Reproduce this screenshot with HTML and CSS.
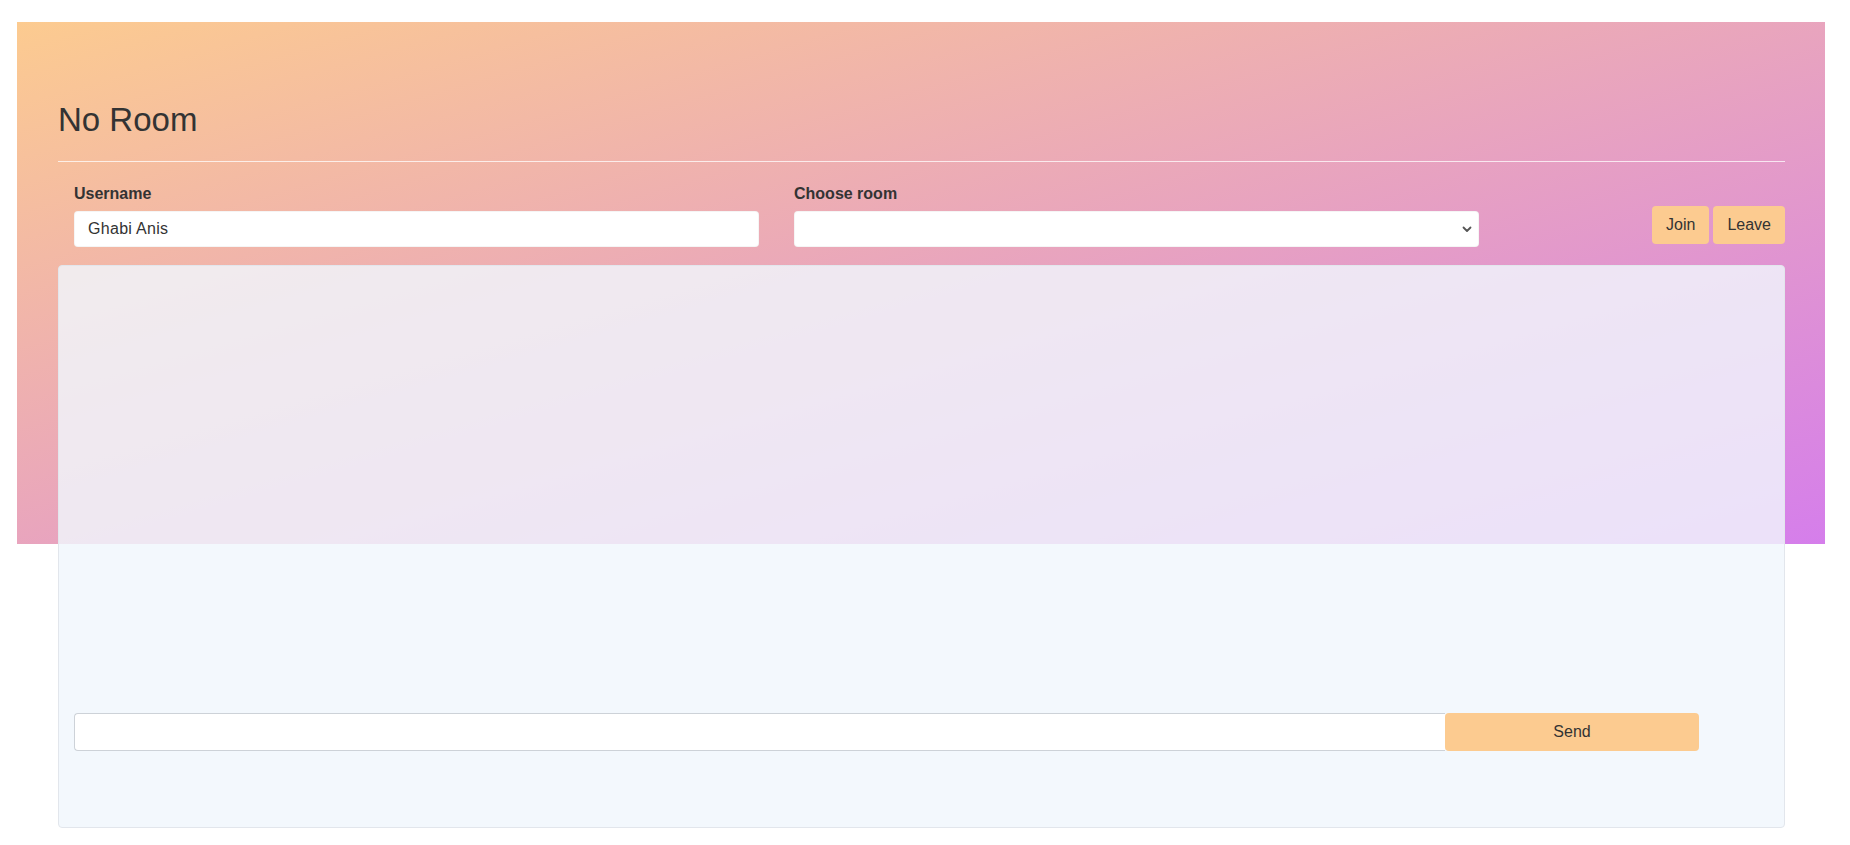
FILE: index.html
```html
<!DOCTYPE html>
<html lang="en">
<head>
<meta charset="utf-8">
<title>Chat</title>
<link rel="stylesheet" href="styles.css">
</head>
<body>
<div class="hero">
  <h1 class="room-title">No Room</h1>
  <hr class="divider">
  <div class="controls">
    <div class="field">
      <label class="field-label" for="username">Username</label>
      <input class="field-input" id="username" type="text" value="Ghabi Anis">
    </div>
    <div class="field">
      <label class="field-label" for="room">Choose room</label>
      <div class="select-wrap">
        <select class="field-select" id="room"><option></option></select>
        <svg class="chevron" width="10" height="7" viewBox="0 0 10 7" aria-hidden="true">
          <path d="M1.5 1.5 L5 5 L8.5 1.5" fill="none" stroke="#555" stroke-width="1.8" stroke-linecap="round" stroke-linejoin="round"/>
        </svg>
      </div>
    </div>
    <div class="actions">
      <button class="btn">Join</button>
      <button class="btn">Leave</button>
    </div>
  </div>
  <div class="chat">
    <div class="messages"></div>
    <div class="composer">
      <input class="message-input" type="text">
      <button class="send-btn">Send</button>
    </div>
  </div>
</div>
</body>
</html>
```

FILE: styles.css
```css
html, body {
  margin: 0;
  padding: 0;
  background: #ffffff;
}

body {
  font-family: "Liberation Sans", Arial, sans-serif;
  color: #333333;
}

.hero {
  box-sizing: border-box;
  margin: 22px 25px 0 17px;
  padding: 78px 40px 0 41px;
  background-image: linear-gradient(to bottom right, #fccb90 0%, #d57eeb 100%);
  background-repeat: no-repeat;
  background-size: 100% 522px;
}

.room-title {
  margin: 0;
  font-size: 33px;
  line-height: 40px;
  font-weight: 400;
  color: #333333;
}

.divider {
  margin: 21px 0 0 0;
  height: 0;
  border: 0;
  border-top: 1px solid rgba(255, 255, 255, 0.75);
}

.controls {
  display: flex;
  align-items: flex-start;
  gap: 35px;
  padding: 22px 0 0 16px;
}

.field {
  display: flex;
  flex-direction: column;
  width: 685px;
}

.field-label {
  font-size: 16px;
  line-height: 20px;
  font-weight: 700;
  color: #333333;
  margin-bottom: 7px;
}

.field-input,
.field-select {
  box-sizing: border-box;
  height: 36px;
  width: 100%;
  border: 1px solid rgba(0, 0, 0, 0.04);
  border-radius: 4px;
  background: #ffffff;
  font-family: "Liberation Sans", Arial, sans-serif;
  font-size: 16px;
  color: #333333;
  outline: none;
}

.field-input {
  padding: 0 13px;
  letter-spacing: 0.3px;
}

.select-wrap {
  position: relative;
}

.field-select {
  display: block;
  padding: 0 8px;
  -webkit-appearance: none;
  appearance: none;
}

.chevron {
  position: absolute;
  right: 7px;
  top: 15px;
}

.actions {
  display: flex;
  gap: 4px;
  margin-left: auto;
  padding-top: 22px;
}

.btn {
  height: 38px;
  padding: 0 14px;
  border: 0;
  border-radius: 4px;
  background: #fccb90;
  font-family: "Liberation Sans", Arial, sans-serif;
  font-size: 16px;
  color: #333333;
}

.chat {
  box-sizing: border-box;
  display: flex;
  flex-direction: column;
  height: 563px;
  margin-top: 18px;
  padding: 0 85px 76px 15px;
  border: 1px solid #e2e6ec;
  border-radius: 4px;
  background: rgba(240, 246, 253, 0.82);
}

.messages {
  flex: 1;
}

.composer {
  display: flex;
  height: 38px;
}

.message-input {
  box-sizing: border-box;
  flex: 1;
  height: 38px;
  border: 1px solid #cdd2d8;
  border-right: 0;
  border-radius: 4px 0 0 4px;
  background: #ffffff;
  outline: none;
  font-family: "Liberation Sans", Arial, sans-serif;
  font-size: 16px;
}

.send-btn {
  width: 254px;
  height: 38px;
  border: 0;
  border-radius: 4px;
  background: #fccb90;
  font-family: "Liberation Sans", Arial, sans-serif;
  font-size: 16px;
  color: #333333;
}
```
